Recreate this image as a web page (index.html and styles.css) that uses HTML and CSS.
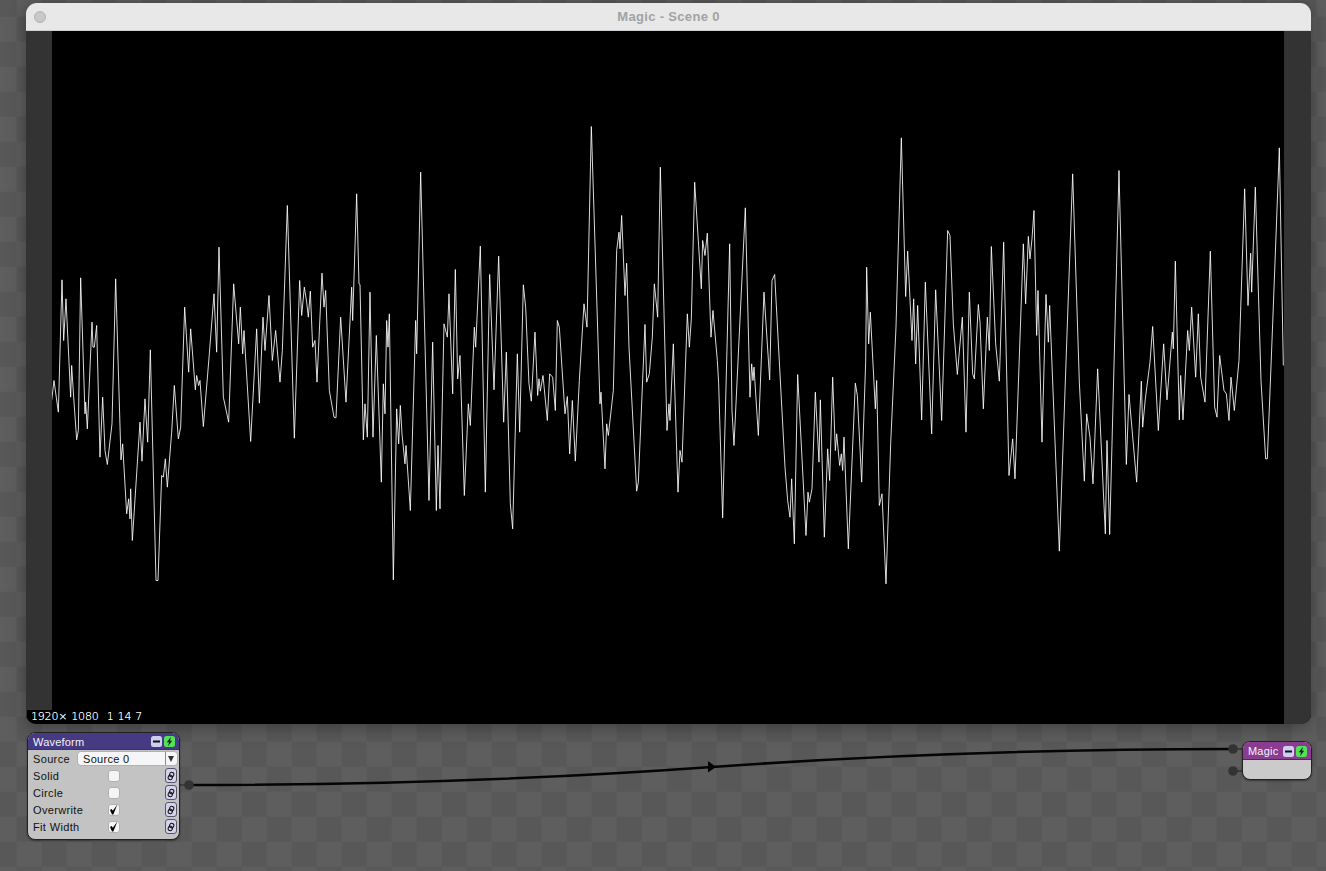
FILE: index.html
```html
<!DOCTYPE html>
<html lang="en">
<head>
<meta charset="utf-8">
<title>Magic - Scene 0</title>
<link rel="stylesheet" href="styles.css">
</head>
<body>
<div class="desktop">
  <section class="window">
    <header class="titlebar">
      <span class="light"></span>
      <span class="title">Magic - Scene 0</span>
    </header>
    <div class="stage">
      <div class="side"></div>
      <div class="viewport">
        <svg class="wave" viewBox="0 0 1232 692" aria-hidden="true">
          <g transform="translate(-2 89) scale(0.33333)">
            <polyline points="5,840 12,780 25,875 36,478 41,660 48,535 62,830 65,735 71,830 80,958 85,930 92,472 105,880 107,845 112,925 126,605 129,680 133,680 140,615 150,1010 158,830 165,990 172,1032 186,910 197,475 213,1018 218,970 230,1180 236,1135 240,1195 242,1105 247,1260 270,905 276,1022 285,835 293,965 301,688 318,1380 324,1380 335,1065 340,1070 346,1015 352,1100 365,935 373,795 385,955 392,920 404,560 416,755 422,625 436,808 440,765 446,795 450,780 460,918 478,700 492,520 500,695 507,380 520,830 536,905 551,490 566,670 571,560 578,700 582,630 602,963 620,625 628,848 639,590 645,690 657,525 667,720 677,630 690,785 697,690 712,255 733,953 749,480 755,585 763,500 770,545 775,590 781,512 788,680 795,660 801,785 816,458 822,560 827,510 838,810 852,890 858,892 872,590 888,845 905,500 908,600 920,220 927,490 930,492"/>
          </g>
          <g transform="translate(308 89) scale(0.33333)">
            <polyline points="0,492 10,958 15,850 22,950 30,515 39,950 49,645 64,1085 70,790 75,880 80,600 84,680 88,580 100,1378 110,865 116,970 121,855 126,940 135,1030 138,975 151,1170 167,600 170,700 182,155 207,1140 218,665 229,1170 234,975 240,1165 252,610 262,650 267,520 278,820 286,447 293,775 300,705 313,1125 325,850 331,915 343,620 347,680 361,377 376,1115 389,462 402,808 416,407 431,905 439,695 451,1150 458,1225 472,700 479,935 490,493 497,560 507,790 514,842 525,635 533,825 537,775 541,812 549,765 562,900 569,760 578,770 586,870 592,600 598,620 615,880 622,828 629,1000 637,840 646,1022 658,780 672,550 681,620 694,18 720,850 723,815 735,1045 740,910 745,945 760,810 770,390 777,335 780,385 785,285 795,525 800,428 807,680 830,1112 835,1085 855,612 860,785 868,760 877,650 883,490 893,590 901,140 921,930 927,850 930,900"/>
          </g>
          <g transform="translate(618 89) scale(0.33333)">
            <polyline points="0,900 10,670 24,1115 30,990 36,1025 52,580 58,680 64,595 74,185 94,505 98,360 105,405 112,338 123,650 129,570 142,720 146,790 158,1192 179,370 186,870 192,975 226,262 240,830 245,730 249,780 252,740 265,945 282,515 299,778 306,480 314,462 345,1040 353,1140 360,1190 365,1075 373,1270 383,762 408,1245 414,1115 418,1145 426,1105 436,815 447,1025 451,838 463,1250 473,985 479,1080 488,770 496,990 500,940 509,1035 514,1000 518,1050 522,950 535,1285 556,788 562,825 575,1085 587,725 590,440 596,670 601,575 616,865 620,780 628,1155 636,1120 648,1390 662,970 678,620 694,52 707,528 713,392 726,660 731,535 737,730 743,555 755,898 766,485 785,940 797,508 815,900 833,330 840,345 850,610 862,762 877,590 888,935 898,515 908,760 913,775 925,552 930,605"/>
          </g>
          <g transform="translate(928 89) scale(0.33333)">
            <polyline points="0,605 10,865 22,590 28,690 34,378 47,670 58,782 71,365 87,1065 98,955 105,1075 130,370 137,550 145,348 150,415 156,355 162,270 170,645 174,510 186,965 198,522 205,665 209,555 238,1292 278,160 298,785 313,1082 320,880 330,950 339,1090 353,745 376,1240 381,960 389,1242 417,150 439,1032 447,822 470,1085 484,782 488,920 496,835 510,725 518,618 535,930 551,670 561,838 577,635 580,685 586,422 598,898 602,765 609,898 623,630 628,690 635,560 647,770 655,580 662,770 675,845 691,392 704,860 711,890 719,705 732,810 739,820 747,900 753,770 763,870 777,720 794,205 804,555 812,398 815,515 826,200 843,780 857,1015 862,1015 878,610 898,82 910,735"/>
          </g>
        </svg>
      </div>
      <div class="side side-right"></div>
      <div class="status">1920× 1080&nbsp;&nbsp;1 14 7</div>
    </div>
  </section>

  <svg class="wires" viewBox="0 0 1326 871" aria-hidden="true">
    <path class="wire" d="M189 785 C 400 785 560 778 712 767 C 880 755 1040 749 1233 749"/>
    <path class="arrow" d="M708 761 L716 767 L708 772.5 Z"/>
    <path class="stub" d="M180 785 H189"/>
    <path class="stub" d="M1233 749 H1243"/>
    <path class="stub" d="M1233 771 H1243"/>
    <circle class="port" cx="189" cy="785" r="4.8"/>
    <circle class="port" cx="1233" cy="749" r="4.8"/>
    <circle class="port" cx="1233" cy="771" r="4.8"/>
  </svg>

  <article class="node waveform">
    <header class="node-head head-blue">
      <span class="node-name">Waveform</span>
      <span class="btn btn-min"><svg viewBox="0 0 11 11"><path d="M2 5.5H9" class="ico"/></svg></span>
      <span class="btn btn-run"><svg viewBox="0 0 11 11"><path d="M7 .8 L2.8 6.2 H5 L4 10.2 L8.2 4.8 H6 Z" class="bolt"/></svg></span>
    </header>
    <div class="row">
      <span class="label">Source</span>
      <span class="select"><span class="select-text">Source 0</span><span class="select-arrow"></span></span>
    </div>
    <div class="row row-check">
      <span class="label">Solid</span>
      <span class="check"></span>
      <span class="link"><svg viewBox="0 0 10 10"><g class="chain"><rect x="3.6" y="1.4" width="4.2" height="4.4" rx="2" transform="rotate(20 5.7 3.6)"/><rect x="2.2" y="4.2" width="4.2" height="4.4" rx="2" transform="rotate(20 4.3 6.4)"/></g></svg></span>
    </div>
    <div class="row row-check">
      <span class="label">Circle</span>
      <span class="check"></span>
      <span class="link"><svg viewBox="0 0 10 10"><g class="chain"><rect x="3.6" y="1.4" width="4.2" height="4.4" rx="2" transform="rotate(20 5.7 3.6)"/><rect x="2.2" y="4.2" width="4.2" height="4.4" rx="2" transform="rotate(20 4.3 6.4)"/></g></svg></span>
    </div>
    <div class="row row-check">
      <span class="label">Overwrite</span>
      <span class="check"><svg viewBox="0 0 12 12"><path class="tick" d="M1.2 6 L3.2 4.8 L4.6 7 L10 -.6 L5.2 11.4 L3.6 11.4 Z"/></svg></span>
      <span class="link"><svg viewBox="0 0 10 10"><g class="chain"><rect x="3.6" y="1.4" width="4.2" height="4.4" rx="2" transform="rotate(20 5.7 3.6)"/><rect x="2.2" y="4.2" width="4.2" height="4.4" rx="2" transform="rotate(20 4.3 6.4)"/></g></svg></span>
    </div>
    <div class="row row-check">
      <span class="label">Fit Width</span>
      <span class="check"><svg viewBox="0 0 12 12"><path class="tick" d="M1.2 6 L3.2 4.8 L4.6 7 L10 -.6 L5.2 11.4 L3.6 11.4 Z"/></svg></span>
      <span class="link"><svg viewBox="0 0 10 10"><g class="chain"><rect x="3.6" y="1.4" width="4.2" height="4.4" rx="2" transform="rotate(20 5.7 3.6)"/><rect x="2.2" y="4.2" width="4.2" height="4.4" rx="2" transform="rotate(20 4.3 6.4)"/></g></svg></span>
    </div>
  </article>

  <article class="node magic">
    <header class="node-head head-purple">
      <span class="node-name">Magic</span>
      <span class="btn btn-min"><svg viewBox="0 0 11 11"><path d="M2 5.5H9" class="ico"/></svg></span>
      <span class="btn btn-run"><svg viewBox="0 0 11 11"><path d="M7 .8 L2.8 6.2 H5 L4 10.2 L8.2 4.8 H6 Z" class="bolt"/></svg></span>
    </header>
    <div class="magic-body"></div>
  </article>
</div>
</body>
</html>
```

FILE: styles.css
```css
* { box-sizing: border-box; }
html, body { margin: 0; padding: 0; height: 100%; overflow: hidden; }
body { font-family: "Liberation Sans", Arial, sans-serif; }

.desktop {
  position: relative;
  width: 1326px;
  height: 871px;
  padding: 3px 15px 0 26px;
  background-color: #5b5b5b;
  background-image: conic-gradient(#5e5e5e 25%, #585858 0 50%, #5e5e5e 0 75%, #585858 0);
  background-size: 50px 50px;
  background-position: 16.7px 16.7px;
}

.window {
  width: 1285px;
  height: 721px;
  border-radius: 11px 11px 10px 10px;
  overflow: hidden;
  display: flex;
  flex-direction: column;
  box-shadow: 0 3px 18px rgba(0, 0, 0, .35);
}
.titlebar {
  flex: 0 0 28px;
  display: flex;
  align-items: center;
  position: relative;
  background: #e8e8e8;
  border-bottom: 1px solid #d0d0d0;
}
.light {
  width: 12px;
  height: 12px;
  margin-left: 8px;
  border-radius: 50%;
  background: #c8c8c8;
  border: 1px solid #b2b2b2;
}
.title {
  position: absolute;
  left: 0;
  right: 0;
  text-align: center;
  font-size: 13px;
  font-weight: 700;
  letter-spacing: .33px;
  color: #a2a2a2;
}
.stage {
  position: relative;
  flex: 1;
  display: flex;
  background: #000;
}
.side { flex: 0 0 26px; background: #333; }
.side-right { flex-basis: 27px; }
.viewport { flex: 1; background: #000; min-width: 0; }
.wave { display: block; width: 100%; height: 100%; }
.wave polyline {
  fill: none;
  stroke: #fff;
  stroke-width: .85px;
  vector-effect: non-scaling-stroke;
  stroke-linejoin: bevel;
  shape-rendering: geometricPrecision;
}
.status {
  position: absolute;
  left: 1px;
  bottom: 0;
  width: 125px;
  height: 14px;
  padding-left: 4px;
  background: #000;
  color: #fff;
  font-family: "DejaVu Sans", sans-serif;
  font-size: 11px;
  font-weight: 200;
  line-height: 13px;
  letter-spacing: -.2px;
  word-spacing: .8px;
  white-space: nowrap;
  text-shadow: 0 0 .6px #fff;
}

.wires {
  position: absolute;
  inset: 0;
  width: 1326px;
  height: 871px;
  pointer-events: none;
}
.wire { fill: none; stroke: #050505; stroke-width: 2.6; }
.stub { fill: none; stroke: #333; stroke-width: 1.5; }
.arrow { fill: #050505; }
.port { fill: #333; }

.node {
  position: absolute;
  background: #c3c3c3;
  border: 1px solid #222;
  border-radius: 8px;
  overflow: hidden;
  font-size: 11px;
  color: #111;
  box-shadow: 0 1px 2px rgba(0, 0, 0, .4);
}
.waveform { left: 27px; top: 732px; width: 153px; height: 108px; }
.magic { left: 1242px; top: 741px; width: 70px; height: 39px; background: #cbcbcb; }

.node-head {
  display: flex;
  align-items: center;
  height: 17px;
  padding: 1px 4px 0 5px;
  gap: 2px;
  border-bottom: 1px solid #3a3a3a;
  color: #f4f4fa;
}
.head-blue { background: #463a82; }
.head-purple { background: #8a3c90; height: 18px; }
.node-name { flex: 1; font-size: 11px; letter-spacing: .2px; white-space: nowrap; }
.btn {
  flex: 0 0 11px;
  width: 11px;
  height: 11px;
  border-radius: 2.5px;
  display: flex;
}
.btn svg { width: 100%; height: 100%; display: block; }
.btn-min { background: #cfcdf0; }
.btn-run { background: #55e05a; }
.ico { stroke: #111; stroke-width: 2; fill: none; }
.bolt { fill: #0c2a10; }

.row {
  display: flex;
  align-items: center;
  height: 17px;
  padding: 0 1px 0 5px;
}
.label { flex: 0 0 45px; font-size: 11px; letter-spacing: .35px; white-space: nowrap; }
.row-check .label { flex-basis: 75px; }
.select {
  flex: 1;
  height: 13px;
  display: flex;
  align-items: center;
  margin-right: 1px;
  background: #f6f6f8;
  border-radius: 3px;
  box-shadow: 0 0 0 .5px #a0a0a0;
  padding-left: 5px;
}
.select-text { flex: 1; font-size: 11px; letter-spacing: .3px; }
.select-arrow {
  width: 12px;
  height: 100%;
  border-left: 1px solid #8a8a8a;
  position: relative;
}
.select-arrow::after {
  content: "";
  position: absolute;
  left: 2px;
  top: 4px;
  border-left: 3.5px solid transparent;
  border-right: 3.5px solid transparent;
  border-top: 6px solid #333;
}
.check {
  flex: 0 0 12px;
  width: 12px;
  height: 12px;
  background: #f5f5f6;
  border: 1px solid #b0b0b4;
  border-radius: 3px;
  display: block;
}
.check svg { display: block; width: 100%; height: 100%; overflow: visible; }
.tick { fill: #000; }
.link {
  flex: 0 0 12px;
  height: 15px;
  margin-left: auto;
  margin-right: 1px;
  background: #d4d2ec;
  border: 1px solid #55556a;
  border-radius: 3px;
  display: flex;
  align-items: center;
}
.link svg { width: 100%; display: block; }
.chain rect { fill: none; stroke: #111; stroke-width: 1; }
.magic-body { height: 20px; }
```
